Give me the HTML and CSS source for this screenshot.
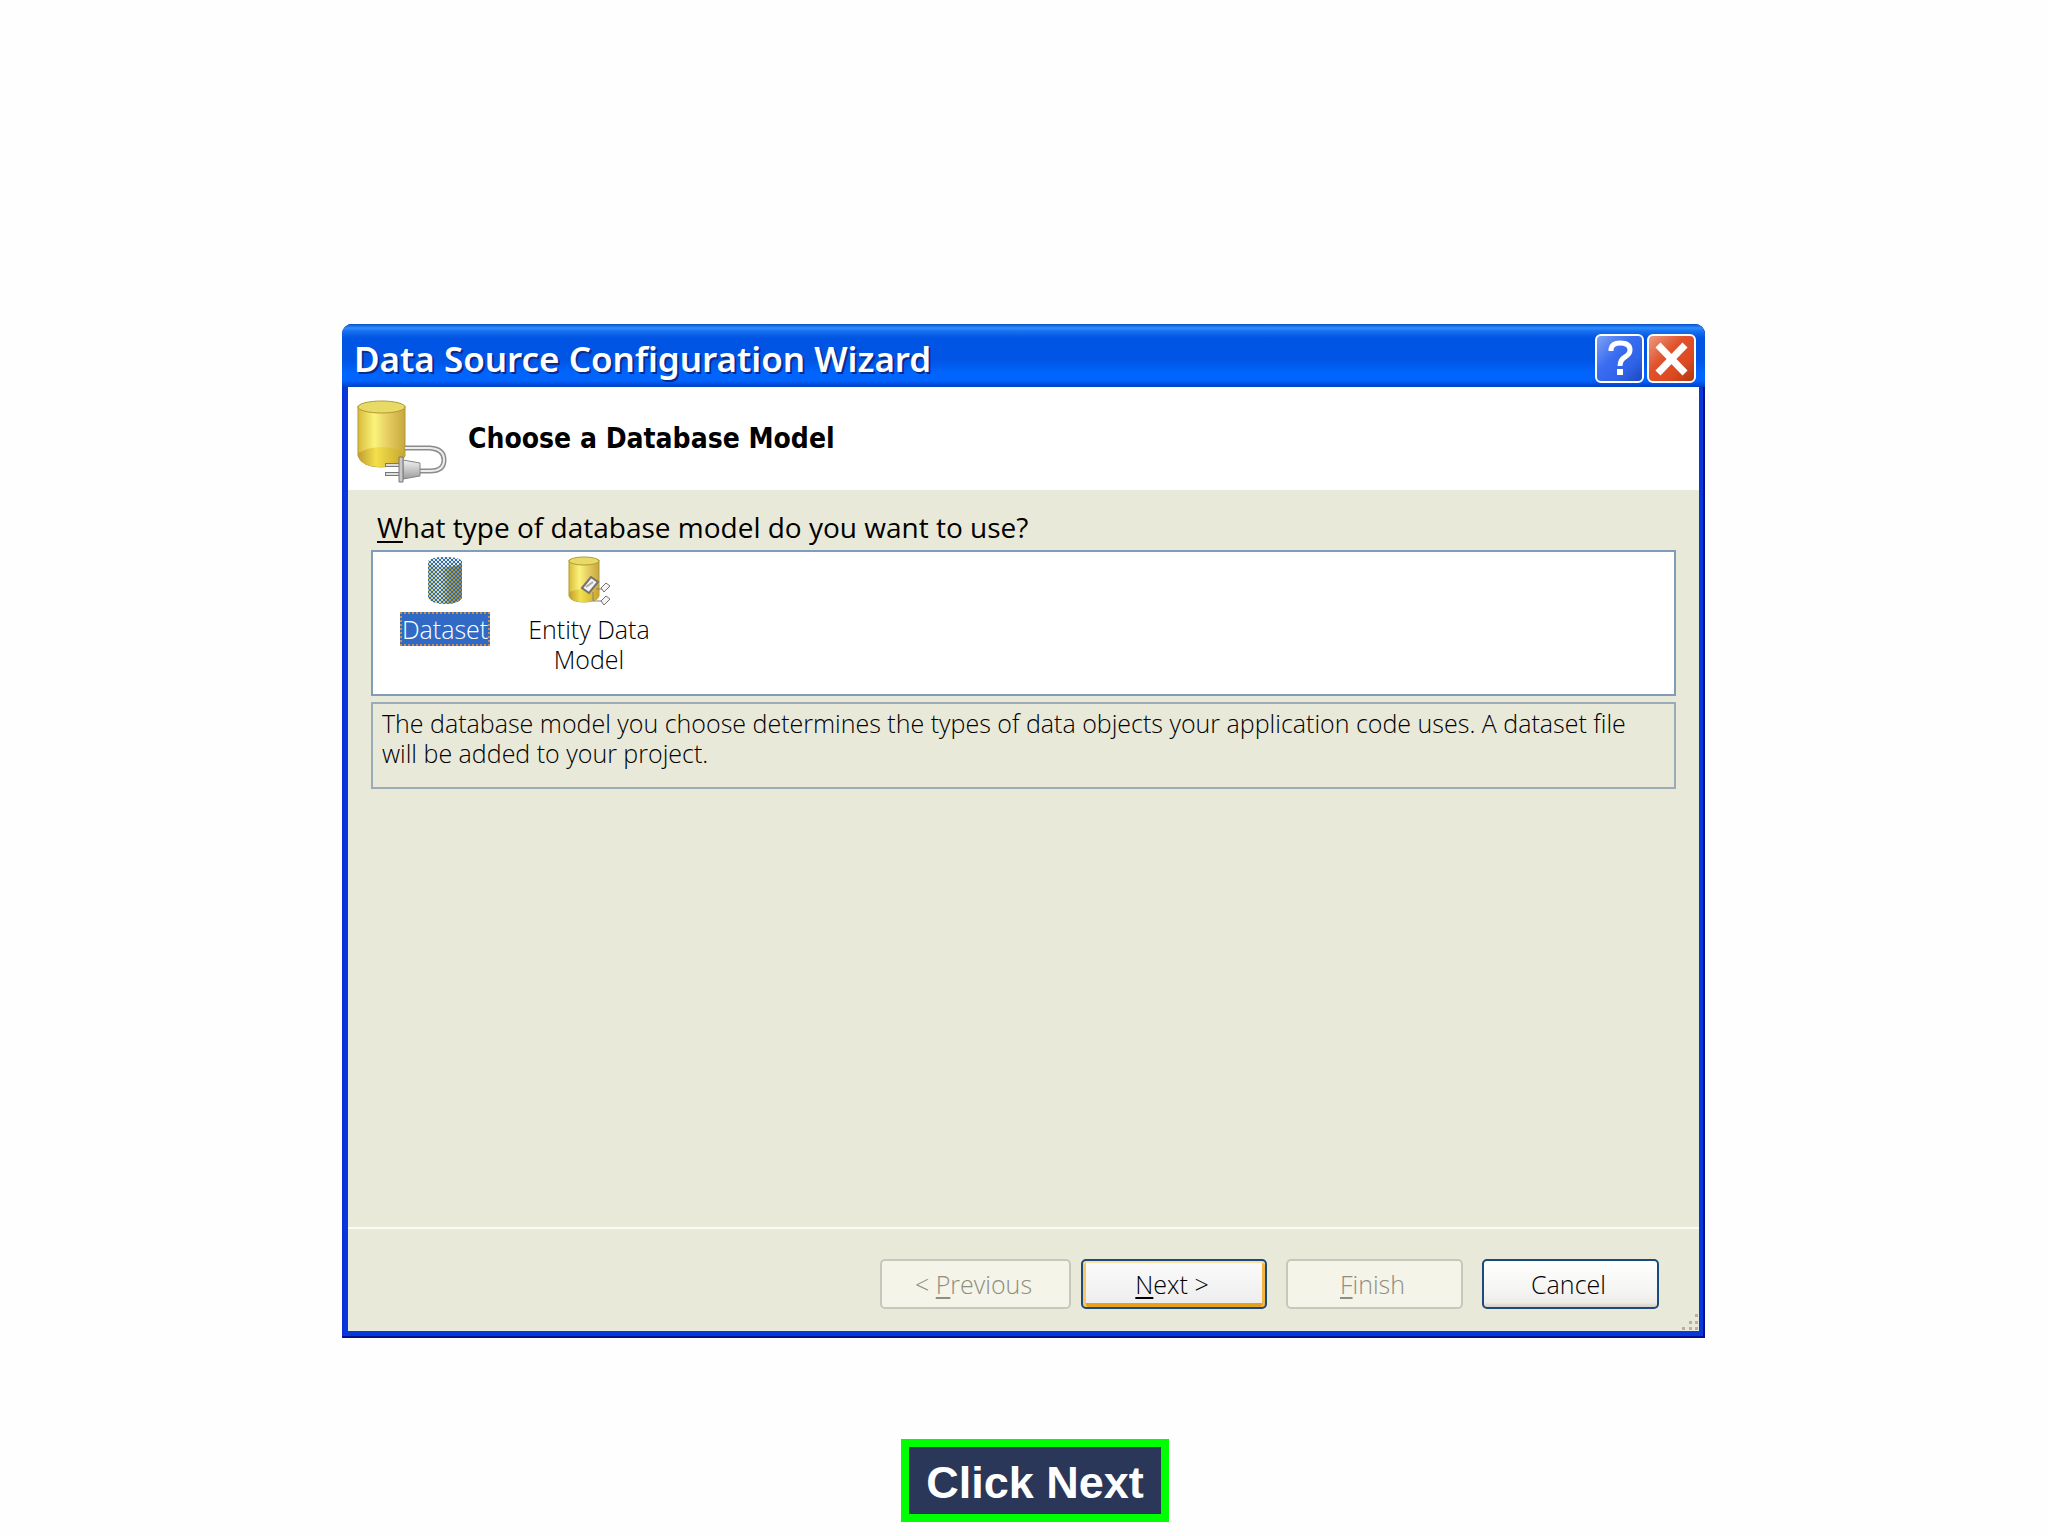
FILE: index.html
```html
<!DOCTYPE html>
<html lang="en">
<head>
<meta charset="utf-8">
<title>Data Source Configuration Wizard</title>
<link rel="stylesheet" href="styles.css">
</head>
<body>
<main class="page">
  <section class="window" aria-labelledby="window-title">
    <header class="titlebar">
      <h1 class="titlebar-text" id="window-title">Data Source Configuration Wizard</h1>
      <button class="caption-button help" type="button" aria-label="Help">
        <svg viewBox="0 0 45 45" width="45" height="45" aria-hidden="true">
          <path d="M14 15V13Q15 7 23 7 33 7 33 14 33 18 28 21 23 24 23 30" fill="none" stroke="#fff" stroke-width="5"/>
          <rect x="20" y="33" width="6" height="6" fill="#fff"/>
        </svg>
      </button>
      <button class="caption-button close" type="button" aria-label="Close">
        <svg viewBox="0 0 45 45" width="45" height="45" aria-hidden="true">
          <path d="M9 9 36 37M36 9 9 37" stroke="#fff" stroke-width="7"/>
        </svg>
      </button>
    </header>

    <div class="client">
      <div class="banner">
        <svg class="banner-icon" viewBox="0 0 94 84" width="94" height="84" aria-hidden="true">
          <defs>
            <linearGradient id="gold" x1="0" x2="1">
              <stop offset="0" stop-color="#d8bc3c"/>
              <stop offset=".35" stop-color="#fbf37c"/>
              <stop offset=".65" stop-color="#e4cb62"/>
              <stop offset="1" stop-color="#c7a73c"/>
            </linearGradient>
            <linearGradient id="gold-base" x1="0" x2="1">
              <stop offset="0" stop-color="#c09c30"/>
              <stop offset=".38" stop-color="#f3e04c"/>
              <stop offset="1" stop-color="#c8a42c"/>
            </linearGradient>
            <linearGradient id="steel" x1="0" x2="0" y1="0" y2="1">
              <stop offset="0" stop-color="#f2f2f2"/>
              <stop offset="1" stop-color="#9c9c9c"/>
            </linearGradient>
          </defs>
          <path d="M4 7V57Q8 68 27 68T51 57V7Z" fill="url(#gold)" stroke="#b3992f"/>
          <path d="M4 54Q27 42 51 54V57Q46 68 27 68T4 57Z" fill="url(#gold-base)"/>
          <ellipse cx="27.500" cy="8" rx="23.500" ry="6" fill="#e8da66" stroke="#b3992f"/>
          <path d="M51 49H76Q90 50 90 61T76 72H66" fill="none" stroke="#8c8c8c" stroke-width="5"/>
          <path d="M51 49H76Q90 50 90 61T76 72H66" fill="none" stroke="#ececec" stroke-width="2"/>
          <path d="M31 66H46M31 75H46" stroke="#777" stroke-width="4"/>
          <path d="M32 66H46M32 75H46" stroke="#ddd" stroke-width="2"/>
          <path d="M49 61 66 64V77L49 80Z" fill="url(#steel)" stroke="#858585"/>
          <path d="M45 58H49V83H45Z" fill="#c8c8c8" stroke="#777"/>
        </svg>
        <h2 class="banner-title">Choose a Database Model</h2>
      </div>

      <div class="content">
        <p class="question" id="question"><u>W</u>hat type of database model do you want to use?</p>
        <div class="model-list" role="group" aria-labelledby="question">
          <button class="model selected" type="button" aria-pressed="true">
            <svg class="model-icon" viewBox="0 0 44 52" width="44" height="52" aria-hidden="true">
              <defs>
                <pattern id="dither" width="4" height="4" patternUnits="userSpaceOnUse">
                  <path d="M0 0h2v2h-2zM2 2h2v2h-2z" fill="#2f6cb4"/>
                </pattern>
                <linearGradient id="olive" x1="0" x2="1">
                  <stop offset="0" stop-color="#cfc66a"/>
                  <stop offset=".35" stop-color="#e3e0a4"/>
                  <stop offset=".65" stop-color="#b39a2c"/>
                  <stop offset="1" stop-color="#a58a3a"/>
                </linearGradient>
              </defs>
              <path d="M5 6V43Q9 49 22 49T39 43V6Z" fill="url(#olive)"/>
              <ellipse cx="22" cy="7" rx="17" ry="5" fill="#e8ecd8"/>
              <path d="M5 6Q8 2 22 2T39 6V43Q35 49 22 49T5 43Z" fill="url(#dither)"/>
            </svg>
            <span class="model-label">Dataset</span>
          </button>
          <button class="model" type="button" aria-pressed="false">
            <svg class="model-icon" viewBox="0 0 44 52" width="44" height="52" aria-hidden="true">
              <path d="M2 5V41Q4 47 17 47T32 41V5Z" fill="url(#gold)" stroke="#b3992f"/>
              <path d="M2 37Q17 31 32 37V41Q30 47 17 47T2 41Z" fill="url(#gold-base)"/>
              <ellipse cx="17" cy="6" rx="15" ry="4" fill="#e8da66" stroke="#b3992f"/>
              <path d="M29 34H35M26 37V46H35" fill="none" stroke="#8a7f78"/>
              <path d="M15 33 24 22 31 27 22 38Z" fill="#f4f4f6" stroke="#77706e" stroke-width="2"/>
              <path d="M19 32 26 27" stroke="#aaa" stroke-width="2"/>
              <path d="M34 33 39 28 43 31 37 37Z" fill="#f4f4f6" stroke="#77706e"/>
              <path d="M34 46 39 41 43 44 37 50Z" fill="#f4f4f6" stroke="#77706e"/>
            </svg>
            <span class="model-label">Entity Data Model</span>
          </button>
        </div>
        <p class="description">The database model you choose determines the types of data objects your application code uses. A dataset file will be added to your project.</p>
      </div>

      <footer class="actions">
        <button class="action previous" type="button" disabled>&lt; <u>P</u>revious</button>
        <button class="action next" type="button"><u>N</u>ext &gt;</button>
        <button class="action finish" type="button" disabled><u>F</u>inish</button>
        <button class="action cancel" type="button">Cancel</button>
        <svg class="grip" viewBox="0 0 17 17" width="17" height="17" aria-hidden="true">
          <path d="M14 1h3v3h-3zM8 8h3v3h-3zM14 8h3v3h-3zM1 14h3v3h-3zM8 14h3v3h-3zM14 14h3v3h-3z" fill="#b4b2a0"/>
        </svg>
      </footer>
    </div>
  </section>

  <p class="callout">Click Next</p>
</main>
</body>
</html>
```
FILE: styles.css
```css
* {
  box-sizing: border-box;
}

body {
  margin: 0;
  background: #fefefe;
  color: #000;
  font: 300 25px/30px "Open Sans", "Noto Sans", sans-serif;
}

h1, h2, p {
  margin: 0;
}

button {
  margin: 0;
  padding: 0;
  color: inherit;
  font: inherit;
}

u {
  text-underline-offset: 3px;
  text-decoration-thickness: 2px;
  text-decoration-skip-ink: none;
}

.page {
  display: flex;
  flex-direction: column;
  align-items: center;
  padding: 324px 25px 14px 24px;
}

/* Window frame */

.window {
  display: flex;
  flex-direction: column;
  width: 100%;
  max-width: 1363px;
  min-height: 1014px;
  padding: 0 6px 7px;
  border-radius: 10px 10px 0 0;
  background: #0837dc;
  box-shadow: inset -2px -2px #00138c, inset 2px 0 #0831d9;
}

.titlebar {
  display: flex;
  align-items: center;
  gap: 3px;
  height: 63px;
  margin: 0 -6px;
  padding: 6px 9px 0 12px;
  border-radius: 10px 10px 0 0;
  background: linear-gradient(#0a50c8 0, #2b8fff 4px, #1a70f0 7px, #0054e3 14px, #0055e5 36px, #0066ff 50px, #0062fa 57px, #0040c4 63px);
}

.titlebar-text {
  flex: 1;
  color: #fff;
  font: 600 35px/48px "Noto Sans", "Open Sans", sans-serif;
  text-shadow: 2px 2px #0a2a8c;
}

.caption-button {
  width: 49px;
  height: 49px;
  border: 2px solid #fff;
  border-radius: 6px;
}

.caption-button svg {
  display: block;
}

.help {
  background: linear-gradient(135deg, #7fa2f5, #3a6df0 40%, #2f63e8 70%, #1c48c0);
}

.close {
  background: linear-gradient(135deg, #ee9a80, #e0522c 40%, #dc4a20 70%, #b03810);
}

.client {
  display: flex;
  flex: 1;
  flex-direction: column;
  background: #e9e9d9;
}

/* Banner */

.banner {
  display: flex;
  align-items: center;
  gap: 20px;
  height: 103px;
  padding-left: 6px;
  background: #fff;
}

.banner-icon {
  margin-top: 4px;
}

.banner-title {
  font: 700 28px/36px "DejaVu Sans Condensed", "DejaVu Sans", sans-serif;
}

/* Model choice */

.content {
  flex: 1;
  padding: 18px 23px 24px;
}

.question {
  padding-left: 6px;
  font-size: 28px;
  font-weight: 400;
  line-height: 38px;
}

.model-list {
  display: flex;
  min-height: 146px;
  margin-top: 4px;
  border: 2px solid #7f9db9;
  background: #fff;
}

.model {
  display: flex;
  flex-direction: column;
  align-items: center;
  gap: 5px;
  width: 144px;
  padding-top: 3px;
  border: 0;
  background: none;
}

.model-label {
  border: 2px solid transparent;
}

.selected .model-label {
  border: 2px dotted #c8904c;
  background: #316ac5;
  color: #fff;
}

.description {
  min-height: 87px;
  margin-top: 6px;
  padding: 4px 9px;
  border: 2px solid #9aacb8;
}

/* Wizard buttons */

.actions {
  position: relative;
  display: flex;
  justify-content: flex-end;
  padding: 30px 40px 22px 24px;
  border-top: 2px solid #fbfbf4;
}

.action {
  width: 177px;
  height: 50px;
  padding-right: 4px;
  border: 2px solid #1c4a7c;
  border-radius: 5px;
  background: linear-gradient(#fff, #f3f3f1 70%, #ecebe6 90%, #d6d0c5);
}

.action:disabled {
  border-color: #c9c7ba;
  background: #f4f4e8;
  color: #8f8e80;
}

.previous {
  width: 191px;
}

.next {
  width: 186px;
  margin-left: 10px;
  background: linear-gradient(#fbfbfb, #ececec);
  box-shadow: inset 0 2px #fce0a0, inset 3px 0 #f9c866, inset -3px 0 #f2b544, inset 0 -4px #e5a01c;
}

.finish {
  margin-left: 19px;
}

.cancel {
  margin-left: 19px;
}

.grip {
  position: absolute;
  right: 1px;
  bottom: 1px;
}

/* Instruction below the window */

.callout {
  margin: 101px 0 0 23px;
  padding: 10px 17px 6px;
  border: 8px solid #0f0;
  background: #2a3759;
  color: #fff;
  font: 700 45px/51px "Liberation Sans", Arial, sans-serif;
}
```
